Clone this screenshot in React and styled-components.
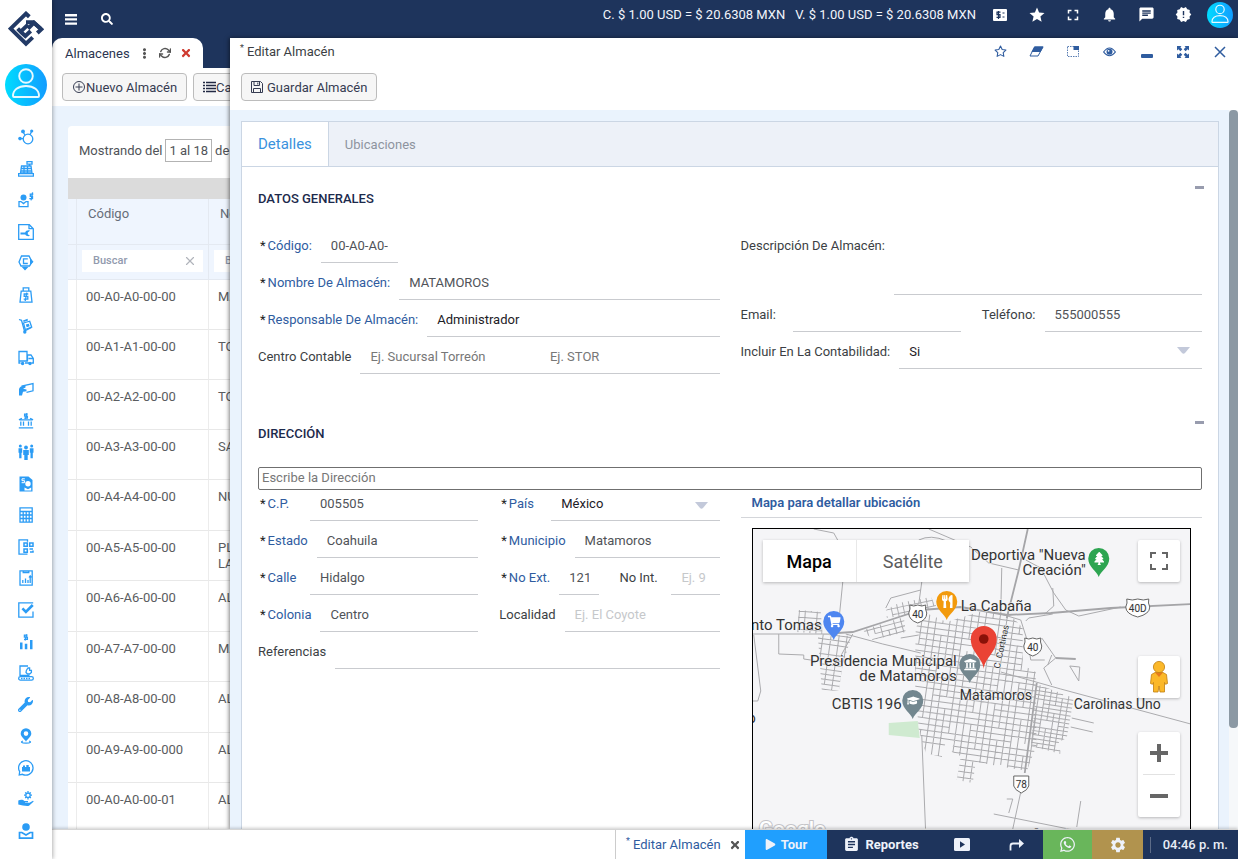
import React from 'react';
import styled, { createGlobalStyle, css } from 'styled-components';
import { FaSearch, FaTimes, FaEllipsisV, FaWrench, FaPlay, FaWhatsapp, FaShoppingCart, FaUtensils, FaTree, FaGraduationCap, FaUniversity } from 'react-icons/fa';
import { MdStar, MdFullscreen, MdNotifications, MdChat, MdNewReleases, MdSettings, MdAssignment } from 'react-icons/md';
import { FiRefreshCw, FiStar, FiX } from 'react-icons/fi';

const colors = {
  navy: '#1e345c',
  sky: '#2b9cf5',
  link: '#2f5c9f',
  text: '#3c3f44',
  line: '#c9cbcf',
  back: '#eaf3fd',
};

const GlobalStyle = createGlobalStyle`
  * {
    box-sizing: border-box;
  }

  body {
    margin: 0;
    overflow: hidden;
    font-family: Roboto, "Liberation Sans", sans-serif;
    font-size: 13px;
    color: ${colors.text};
    background: #fff;
  }

  button, input, select, textarea {
    font: inherit;
    color: inherit;
    border: 0;
    margin: 0;
    padding: 0;
    background: none;
    border-radius: 0;
    outline: none;
  }

  svg {
    display: block;
    flex: none;
  }
`;

/* ---------- shell ---------- */

const Shell = styled.div`
  display: flex;
  height: 100vh;
`;

const Main = styled.div`
  flex: 1;
  min-width: 0;
  display: flex;
  flex-direction: column;
`;

const Workspace = styled.div`
  flex: 1;
  min-height: 0;
  display: flex;
`;

/* ---------- sidebar ---------- */

const Sidebar = styled.aside`
  width: 52px;
  z-index: 3;
  display: flex;
  flex-direction: column;
  align-items: center;
  padding: 11px 0 20px;
  background: #fff;
  box-shadow: 1px 0 4px rgba(0, 0, 0, 0.3);
`;

const SideAvatar = styled.div`
  margin: 17px 0 23px;
`;

const SideNav = styled.nav`
  flex: 1;
  display: flex;
  flex-direction: column;
  justify-content: space-between;
`;

const SideLink = styled.a`
  color: ${colors.sky};
  height: 16px;
`;

const strokeProps = { fill: 'none', stroke: 'currentColor', strokeWidth: 1.3 };

const sideIcons = [
  ['Socios', <g><circle cx="10" cy="10" r="4.8" {...strokeProps} /><path d="M5 3l2 3M13.6 2.5L12 5.8M2 9.6h3" {...strokeProps} /><circle cx="5" cy="2.4" r="1.9" /><circle cx="13.7" cy="2" r="1.6" /><circle cx="2" cy="9.6" r="1.8" /></g>],
  ['Punto de venta', <g><path d="M9 .6h5v2.6H9zM11.5 3v2M3.500 5h9.500l1 7H2.500zM.6 12.600h14.800v2.600H.6zM3 7.500h10M2.800 10h10.700M6 5v7M9.500 5v7" {...strokeProps} /></g>],
  ['Ventas', <g><circle cx="5.500" cy="5.500" r="3" /><path d="M1 9.600h2l2.500 2 2.500-2h2v5H1z" {...strokeProps} /><path d="M15.300 2.200h-3v2.200h2.200v2.200h-3.200M14.600.3l-1.600 8" {...strokeProps} /></g>],
  ['Servicios', <g><path d="M.7.7h10.600l4 4v10.600H.7z" {...strokeProps} /><path d="M11 .7v4h4" {...strokeProps} /><path d="M2.500 8.500h4.700c.6-1.900 2.900-2.800 4.800-1.800L9.800 8.600v1.700l2.200 1.500c-1.900.9-4 .2-4.700-1.300H2.500z" /></g>],
  ['Compras', <g><path d="M3.500 1h7.500l3 5.800-2.500 4.200H3L1 7z" {...strokeProps} /><path d="M9.800 3.800H5.500V8.500h4.300" {...strokeProps} /><path d="M3.800 12h6.600L7 15.600zM12 3l3.500 3.800L12 10.500z" /></g>],
  ['Pedidos', <g><path d="M3.200 4.200h9.600l1.200 11H2zM5.200 4V.8h5.600V4" {...strokeProps} /><path d="M10.300 7H6.200v2.400h3.600v2.700H5.700M8.800 5.600L7.200 14" {...strokeProps} /></g>],
  ['Almacén', <g><path d="M1 1.500l2.500.8L6.500 13l7-3.500" {...strokeProps} /><circle cx="6.800" cy="14" r="1.700" /><path d="M5.500 5l6.200-1.800 2 6L7.200 11.500z" {...strokeProps} /><path d="M7.800 6.600l3-.8.9 2.500-3 .9zM5 2.500L9.500.8l.5 1.800-4.300 1.500z" /></g>],
  ['Embarques', <g><path d="M1 1.500h8v9.500H1zM9.500 5h3.500l2.300 3.500V13h-2M9.500 11.500V5M1 11.500V13h1.500M7 13h4M10.500 8.500h4.500" {...strokeProps} /><circle cx="4.600" cy="13.500" r="1.700" /><circle cx="12" cy="13.500" r="1.700" /></g>],
  ['Pagos', <g><path d="M3.500 5.200L15 2.500v7.300l-6.500 1.500" {...strokeProps} /><path d="M1 8C2 5.200 4 4.600 7.500 4.800v1.800L5 7.700l3.500.8v1.700l-3.500.5-1 3.800H1z" /></g>],
  ['Bancos', <g><path d="M.8 14.800h14.400M1.500 6.800h13M2.800 8.500v4.300M5.500 8.500v4.300M10.500 8.500v4.300M13.200 8.500v4.300M.9 6.800l3-1.600M15.100 6.800l-3-1.600" {...strokeProps} /><path d="M9.800 1.200H6.600v1.900h2.800v2H6.200M8.800.2L7.500 6" {...strokeProps} /></g>],
  ['Recursos humanos', <g><circle cx="8" cy="3.500" r="1.900" /><circle cx="2.300" cy="2" r="1.500" /><circle cx="13.700" cy="2" r="1.500" /><path d="M5.200 6h5.600v5H9.700v5H6.300v-5H5.200zM.5 4.300h3.700v4.500H3.500v5.500H1.200V8.800H.5zM11.800 4.300h3.700v4.500h-.7v5.500h-2.300V8.800h-.7z" /></g>],
  ['Nómina', <g><path d="M1.500.5h9L14.500 4v11.500h-13z" /><path d="M6.800 2.800H4v1.900h2.600v2H3.600" fill="none" stroke="#fff" strokeWidth="1" /><circle cx="10" cy="7.800" r="2.700" fill="#fff" /><path d="M6.500 14.500v-3l3.500 1.700 3.200-1.700v3z" fill="#fff" /></g>],
  ['Contabilidad', <g><path d="M2 .8h12.200v14.400H2zM2 4.500h12.200M2 8h12.200M2 11.500h12.200M5.200 4.500v10.700M8.200 4.500v10.700M11.200 4.500v10.700" {...strokeProps} /></g>],
  ['Inventario', <g><path d="M9.500 15.200H1V.8h8.500v2" {...strokeProps} /><path d="M6 4h3.300v3.300H6zM11.700 4H15v3.300h-3.300zM6 10h3.300v3.300H6zM11.500 10H15M12 13h3v-1.500" fill="none" stroke="currentColor" strokeWidth="1.500" /></g>],
  ['Informes', <g><path d="M2 .8h12.200v14.400H2zM5.200 1v1.500h5.600V1M4.800 13v-3M7.500 13V8.500M10 13v-3M12.200 13V6.500M11 7.500l1.200-1.700L13.400 7.500" {...strokeProps} /></g>],
  ['Tareas', <g><path d="M15 9.500v5.700H.8V.8h14.400" {...strokeProps} /><path d="M3.500 7.300L5.300 5.400l2.600 2.700L13.800 2l1.900 1.900-7.800 7.900z" /></g>],
  ['Estadísticas', <g><path d="M2 8.500h2.500v6.700H2zM6.800 9.800h2.500v5.400H6.800zM12 6h2.500v9.200H12z" /><path d="M9.600 1.200H6.400v2h3v2.200H6M8.800.2L7 6.500" {...strokeProps} /></g>],
  ['Producción', <g><path d="M10 1H2v9.300h9.500" {...strokeProps} /><path d="M8 7.500c0-2.500 1-3 2-4.500h1.600v2.300h1.800v2.200l-1.800 1.500H9.500z" {...strokeProps} /><rect x=".7" y="11.600" width="14.600" height="3.500" rx="1.700" {...strokeProps} /><path d="M3 13.400h10" fill="none" stroke="currentColor" strokeWidth="1.500" strokeDasharray="1.500 1" /></g>],
  ['Mantenimiento', null],
  ['Ubicaciones', <g><path d="M8 .3a5.300 5.300 0 0 0-5.300 5.300C2.700 9 6.500 11 8 13.700 9.500 11 13.300 9 13.300 5.600A5.300 5.300 0 0 0 8 .3zm0 7.600a2.300 2.300 0 1 1 0-4.600 2.300 2.300 0 0 1 0 4.600z" /><path d="M5 13c-2.500.8-2 2.200 3 2.200s5.500-1.400 3-2.200" {...strokeProps} /></g>],
  ['Soporte', <g><path d="M1.200 15l.5-3.300A7.200 7.200 0 1 1 4.500 14.300z" {...strokeProps} /><path d="M4 7h1V5.500h2V7h1.300V5h2.400v2H12v4.500H4z" /></g>],
  ['Beneficios', <g><circle cx="10" cy="4.200" r="2.200" {...strokeProps} /><path d="M10 0v1.500M10 7v1.500M6 4.200h1.500M12.500 4.200H14M7.200 1.400l1 1M12.800 1.400l-1 1M7.200 7l1-1M12.800 7l-1-1" {...strokeProps} /><path d="M.3 9.500C3 8.200 5 8.700 6.500 10H10v1.200H7v.6h4.500l3.500-2 .7.8-4.700 4.200c-3 .8-7-.8-10.700-1.300z" /></g>],
  ['Perfil', <g><circle cx="8" cy="4" r="3.800" /><path d="M1.500 9.500h2.300L8 12l4.200-2.500h2.300v5.700h-13z" fill="none" stroke="currentColor" strokeWidth="1.700" /></g>],
];

const Avatar = ({ size }) => (
  <svg width={size} height={size} viewBox="0 0 42 42" role="img" aria-label="Usuario">
    <defs>
      <linearGradient id={`avatar${size}`} x1="0" y1="0" x2="1" y2="0">
        <stop offset="0" stopColor="#00dcff" />
        <stop offset="1" stopColor="#129cff" />
      </linearGradient>
    </defs>
    <circle cx="21" cy="21" r="21" fill={`url(#avatar${size})`} />
    <g fill="none" stroke="#e8f9ff" strokeWidth="1.900" strokeLinejoin="round">
      <circle cx="21" cy="12" r="6.800" />
      <path d="M8 32c0-6 5-10 13-10s13 4 13 10c0 .8-.5 1-1 1H9c-.6 0-1-.3-1-1z" />
    </g>
  </svg>
);

const Logo = () => (
  <svg width="36" height="36" viewBox="24 35 108 108" role="img" aria-label="Inicio">
    <g fill="none" stroke="#223a66" strokeWidth="12">
      <path d="M88 52L78 43 32 88 78 133 98 114" />
      <path d="M53 88L62 97 84 76M62 97L76 110 92 95" />
      <path d="M78 69L100 69 122 88" />
      <path d="M84 88L102 70 124 90 112 101" />
    </g>
  </svg>
);

/* ---------- top bar ---------- */

const TopBar = styled.header`
  height: 38px;
  flex: none;
  display: flex;
  justify-content: space-between;
  color: #fff;
  background: ${colors.navy};
`;

const TopLeft = styled.div`
  display: flex;
  align-items: center;
  gap: 24px;
  padding-left: 13px;
`;

const TopRight = styled.div`
  display: flex;
  height: 29px;
  align-items: center;
`;

const Rates = styled.div`
  display: flex;
  gap: 10px;
  margin-right: 6px;
  font-size: 13px;
  color: #f2f5fb;
`;

const IconSlots = styled.div`
  width: 256px;
  flex: none;
  display: grid;
  grid-template-columns: repeat(7, 1fr);
  align-items: center;
  justify-items: center;
`;

const IconButton = styled.button`
  display: flex;
  align-items: center;
  justify-content: center;
  cursor: pointer;
  color: ${(props) => props.$color || 'inherit'};
`;

/* ---------- list window ---------- */

const ListWindow = styled.section`
  width: 178px;
  flex: none;
  overflow: hidden;
  background: ${colors.back};
`;

const TabStrip = styled.div`
  height: 30px;
  background: ${colors.navy};
`;

const WindowTab = styled.div`
  width: 151px;
  height: 30px;
  display: flex;
  align-items: center;
  gap: 9px;
  padding: 0 11px 0 13px;
  border-radius: 10px 10px 0 0;
  background: #fff;
`;

const WindowName = styled.span`
  flex: 1;
  color: #2b3550;
`;

const Toolbar = styled.div`
  display: flex;
  gap: 6px;
  padding: ${(props) => props.$padding};
  background: #fff;
`;

const ToolButton = styled.button`
  height: 28px;
  flex: none;
  display: flex;
  align-items: center;
  gap: ${(props) => props.$gap || '0'};
  padding: 0 9px;
  font-size: 13px;
  white-space: nowrap;
  color: #363c52;
  border: 1px solid #bcbcbc;
  border-radius: 4px;
  background: #f6f6f6;
  cursor: pointer;
`;

const ListCard = styled.div`
  width: 300px;
  margin: 20px 0 0 16px;
  border-radius: 4px;
  background: #fff;
`;

const Showing = styled.div`
  height: 52px;
  display: flex;
  align-items: center;
  gap: 3px;
  padding: 0 11px 3px;
  color: #505358;
`;

const Range = styled.span`
  padding: 3px;
  border: 1px solid #b3b3b3;
`;

const Band = styled.div`
  height: 21px;
  background: #dbdbdb;
`;

const Table = styled.table`
  width: 100%;
  table-layout: fixed;
  border-collapse: separate;
  border-spacing: 0;

  th, td {
    padding: 9px 9px 0;
    text-align: left;
    vertical-align: top;
    line-height: 16px;
    border-right: 1px solid #ececec;
    border-bottom: 1px solid #e8e8e8;
  }

  th {
    padding: 7px 11px 0;
    font-weight: 400;
    color: #666d79;
    background: #eff5fe;
    border-color: #e4e9f1;
  }

  tr > :first-child {
    width: 9px;
    padding: 0;
  }

  tr > :nth-child(2) {
    width: 132px;
  }

  tbody tr {
    height: 50px;
  }

  tbody tr:nth-child(2n + 5) {
    height: 51px;
  }

  td {
    color: #5a5c60;
  }
`;

const HeadRow = styled.tr`
  height: 46px;
`;

const FilterRow = styled.tr`
  height: 35px;

  th {
    padding: 5px;
  }
`;

const Filter = styled.label`
  height: 22px;
  display: flex;
  align-items: center;
  padding: 0 6px 0 11px;
  color: #b0b4bb;
  background: #fff;

  input {
    width: 100%;
    min-width: 0;
    font-size: 11px;
    font-weight: 500;
  }

  input::placeholder {
    color: #929aae;
  }
`;

/* ---------- editor window ---------- */

const Editor = styled.section`
  flex: 1;
  min-width: 0;
  z-index: 1;
  display: flex;
  flex-direction: column;
  background: #fff;
  box-shadow: -1px 0 4px rgba(0, 0, 0, 0.5);
`;

const TitleBar = styled.div`
  height: 27px;
  flex: none;
  display: flex;
  justify-content: space-between;
  align-items: center;
  padding-left: 10px;

  h1 {
    margin: 0;
    font-size: 13px;
    font-weight: 400;
  }
`;

const Star = styled.sup`
  font-size: 9px;
  line-height: 1;
  margin-right: 3px;
`;

const EditorBody = styled.div`
  flex: 1;
  min-height: 0;
  display: flex;
  background: ${colors.back};
`;

const Scroller = styled.div`
  flex: 1;
  min-width: 0;
  overflow-y: auto;
  scrollbar-width: none;
  padding: 11px 10px 0 11px;
`;

const Rail = styled.div`
  width: 9px;
  flex: none;
  background: #f6f8fa;
`;

const Thumb = styled.div`
  height: 86%;
  border-radius: 4px;
  background: #8c99a4;
`;

const Panel = styled.div`
  border: 1px solid #cbd6e4;
  background: #fff;
`;

const Tabs = styled.div`
  height: 45px;
  display: flex;
  background: #edf1f8;
  border-bottom: 1px solid #cbd6e4;
`;

const Tab = styled.button`
  padding: 0 16px;
  color: #8d949f;
  cursor: pointer;

  ${(props) => props.$active && css`
    font-size: 15px;
    color: #3a92dd;
    background: #fff;
    border-right: 1px solid #cbd6e4;
  `}
`;

const Section = styled.section`
  padding: 0 16px;
`;

const SectionHead = styled.div`
  height: 59px;
  display: flex;
  justify-content: space-between;
  align-items: flex-start;
  padding-top: 12px;

  h2 {
    margin: 11px 0 0;
    font-size: 13px;
    line-height: 18px;
    font-weight: 500;
    color: #1c2a4c;
  }
`;

const Collapse = styled.button`
  width: 13px;
  height: 17px;
  margin-right: -4px;
  display: flex;
  align-items: center;
  justify-content: center;
  cursor: pointer;

  &::before {
    content: "";
    width: 9px;
    height: 3px;
    background: #989cae;
  }
`;

const Columns = styled.div`
  display: grid;
  grid-template-columns: 1fr 1fr;
  column-gap: ${(props) => props.$gap || '21px'};
  align-items: start;
  margin-bottom: ${(props) => props.$after || '0'};
`;

const FieldRow = styled.div`
  display: flex;
  height: ${(props) => (props.$short ? '31px' : '37px')};
  width: ${(props) => props.$width || 'auto'};
  grid-column: ${(props) => (props.$wide ? '1 / -1' : 'auto')};

  > label {
    flex: none;
    min-width: 52px;
    padding-right: 9px;
    line-height: ${(props) => (props.$short ? '27px' : '39px')};
    color: ${(props) => (props.$required ? colors.link : colors.text)};
  }

  > label::before {
    content: ${(props) => (props.$required ? '"*"' : 'none')};
    margin: 0 2px;
    color: #222;
  }

  input, select {
    flex: 1;
    width: 100%;
    min-width: 0;
    padding: ${(props) => (props.$short ? '0 10px 4px' : '2px 10px 0')};
    color: ${(props) => (props.$strong ? '#1d2026' : '#505358')};
    border-bottom: 1px solid ${colors.line};
  }

  select {
    appearance: none;
    color: #1d2026;
  }

  input::placeholder {
    color: ${(props) => (props.$faint ? '#c6c8cb' : '#777')};
    opacity: 1;
  }
`;

const SelectBox = styled.span`
  flex: 1;
  min-width: 0;
  display: grid;
  align-items: stretch;

  > * {
    grid-area: 1 / 1;
  }

  svg {
    justify-self: end;
    align-self: center;
    margin-right: 12px;
    pointer-events: none;
  }
`;

const AreaRow = styled.div`
  display: flex;
  height: 69px;

  label {
    padding-right: 9px;
    line-height: 39px;
  }

  textarea {
    flex: 1;
    min-width: 0;
    padding: 10px;
    resize: none;
    border-bottom: 1px solid ${colors.line};
  }
`;

const AddressInput = styled.input`
  width: 100%;
  height: 23px;
  display: block;
  margin-top: 6px;
  padding: 0 3px 2px;
  border: 1px solid #6f6f6f;
  border-radius: 2px;

  &::placeholder {
    color: #777;
    opacity: 1;
  }
`;

/* ---------- map ---------- */

const MapTitle = styled.h3`
  margin: 0;
  height: 28px;
  padding-left: 11px;
  font-size: 13px;
  line-height: 26px;
  font-weight: 600;
  color: ${colors.link};
  border-bottom: 1px solid #d4d6da;
`;

const MapBox = styled.div`
  position: relative;
  height: 316px;
  margin: 10px 11px 24px;
  overflow: hidden;
  border: 1px solid #000;
  background: #f5f5f7;
`;

const MapControls = styled.div`
  position: absolute;
  inset: 11px 10px 12px;
  display: flex;
  justify-content: space-between;
`;

const MapTypes = styled.div`
  height: 42px;
  display: flex;
  background: #fff;
  box-shadow: 0 1px 3px rgba(0, 0, 0, 0.25);
`;

const MapType = styled.button`
  padding: 0 ${(props) => (props.$active ? '24px' : '26px')};
  font-size: 18px;
  font-weight: ${(props) => (props.$active ? 500 : 400)};
  color: ${(props) => (props.$active ? '#000' : '#5c5c5c')};
  border-right: ${(props) => (props.$active ? '1px solid #e8e8e8' : '0')};
  cursor: pointer;
`;

const MapSide = styled.div`
  display: flex;
  flex-direction: column;
`;

const MapButton = styled.button`
  width: 42px;
  height: 42px;
  display: flex;
  align-items: center;
  justify-content: center;
  background: #fff;
  box-shadow: 0 1px 3px rgba(0, 0, 0, 0.25);
  border-radius: 2px;
  cursor: pointer;
  margin-bottom: ${(props) => props.$after || '0'};
`;

const ZoomGroup = styled.div`
  background: #fff;
  box-shadow: 0 1px 3px rgba(0, 0, 0, 0.25);
  border-radius: 2px;

  button {
    box-shadow: none;
    background: none;
  }

  hr {
    margin: 0 5px;
    border: 0;
    height: 1px;
    background: #e2e2e2;
  }
`;

// street blocks: straight lines in a tilted frame, with some blocks left open
const streets = (cx, cy, w, h, sx, sy) => {
  let d = '';
  let n = 0;
  for (let x = -w / 2; x <= w / 2; x += sx) {
    for (let y = -h / 2; y < h / 2; y += sy * 2) {
      n += 1;
      if ((n * 37) % 11 > 0) d += `M${cx + x} ${cy + y}v${sy * 2}`;
    }
  }
  for (let y = -h / 2; y <= h / 2; y += sy) {
    for (let x = -w / 2; x < w / 2; x += sx * 3) {
      n += 1;
      if ((n * 29) % 13 > 0) d += `M${cx + x} ${cy + y}h${sx * 3}`;
    }
  }
  return d;
};

const districts = [
  { id: 'centro', tilt: 8, at: [970, 690], size: [200, 220], step: [7, 6], edge: '915,628 923,612 946,622 978,612 1007,612 1022,628 1022,665 1035,672 1036,745 1026,771 975,762 972,783 956,780 960,756 951,752 953,742 945,742 941,757 925,753 918,730 914,680' },
  { id: 'oriente', tilt: 9, at: [1050, 715], size: [90, 100], step: [6, 4], edge: '1036,684 1073,698 1066,738 1058,742 1060,754 1030,746' },
  { id: 'poniente', tilt: -15, at: [888, 630], size: [70, 60], step: [7, 5], edge: '862,630 903,617 905,632 872,640' },
  { id: 'norte', tilt: -12, at: [895, 610], size: [80, 40], step: [6, 6], edge: '885,610 898,603 930,597 936,607 900,616 886,618' },
  { id: 'tomas', tilt: 8, at: [830, 660], size: [70, 90], step: [8, 5], edge: '817,634 851,636 842,664 838,691 821,690' },
  { id: 'tomas2', tilt: 4, at: [810, 620], size: [60, 40], step: [6, 6], edge: '798,610 820,612 822,634 796,632' },
];

const roads = 'M813 529l20 4 5 9M842 582l-5 50M752 634h85M778 634v20l25 1v4l14 2M852 634l-12 22M753 635l7 56-3 10h-5M921 582l-3 22M918 540q12-6 28 1M928 529l42 18 18 16 30 7M1001 568l-1 44M1025 560l15 8 13 25 12 17 13 6 42-9M1052 588l1 18-9 8M1000 614l20 6 7 22M1027 640l3 20h14M1041 638l14 20-12 10 8 17M1000 672l60 17 130 35M1071 718l22 5M1070 727l22 5M1020 792l-8 37M993 814l90 18M1080 801l-4 26M921 735l4 100M1006 799h6l-4 14M845 634l37 10 38 9M1069 666l10 1-1 14zM1047 665l4-10M1025 621l3-3 24-4M885 608l5-10 30-8M900 638l18-3';
const highways = 'M837 633l15-1 28-9 40-13 40-3 45 8 45-2 60-5 80-4M1027 529l-9 41-12 48M1055 658l20 1M1036 683l-12 90';

const MapLabel = styled.text`
  font-family: Roboto, sans-serif;
  font-size: ${(props) => props.$size || '15px'};
  fill: #333;
  stroke: #f5f5f7;
  stroke-width: 1px;
  paint-order: stroke;
`;

const LogoLabel = styled.text`
  font-family: Roboto, sans-serif;
  font-size: 21px;
  font-weight: 500;
  fill: #fff;
  stroke: #c4c4c8;
  stroke-width: 2px;
  paint-order: stroke;
`;

const pins = [
  { x: 833, y: 640, fill: '#4e86f0', Icon: FaShoppingCart },
  { x: 946, y: 620, fill: '#f29a0c', Icon: FaUtensils },
  { x: 1098, y: 577, fill: '#2da551', Icon: FaTree },
  { x: 969, y: 683, fill: '#73878f', Icon: FaUniversity },
  { x: 912, y: 719, fill: '#73878f', Icon: FaGraduationCap },
];

const shields = [
  { x: 917, y: 614, w: 16, label: '40' },
  { x: 1032, y: 647, w: 16, label: '40' },
  { x: 1137, y: 608, w: 22, label: '40D' },
];

const CityMap = () => (
  <svg width="100%" height="100%" viewBox="752 529 438 314" preserveAspectRatio="xMidYMin slice" role="img" aria-label="Mapa de Matamoros">
    <defs>
      {districts.map((d) => (
        <clipPath id={d.id} key={d.id}><polygon points={d.edge} /></clipPath>
      ))}
    </defs>
    <path d="M888 723l29-2 2 17-31-3z" fill="#cfead0" />
    <g fill="none" stroke="#ababae" strokeWidth="1">
      {districts.map((d) => (
        <g clipPath={`url(#${d.id})`} key={d.id}>
          <path d={streets(...d.at, ...d.size, ...d.step)} transform={`rotate(${d.tilt} ${d.at[0]} ${d.at[1]})`} />
        </g>
      ))}
      <path d={roads} />
      <path d={highways} stroke="#a5a5a8" strokeWidth="1.800" />
    </g>
    {shields.map(({ x, y, w, label }) => (
      <g key={`${x}-${label}`}>
        <path d={`M${x - w / 2} ${y - 9}q${w / 4} 2 ${w / 2} 0q${w / 4} 2 ${w / 2} 0q-1 4 1 8q0 7-${w / 2 + 1} 10q-${w / 2 + 1}-3-${w / 2 + 1}-10q2-4 1-8z`} fill="#fff" stroke="#666" />
        <MapLabel $size="10px" x={x} y={y + 4} textAnchor="middle">{label}</MapLabel>
      </g>
    ))}
    <path d="M1013 776h15v10q-1 4-7.500 7q-6.500-3-7.500-7z" fill="#fff" stroke="#666" />
    <MapLabel $size="10px" x="1020.500" y="788" textAnchor="middle">78</MapLabel>
    <MapLabel x="1085" y="560" textAnchor="end">Deportiva "Nueva</MapLabel>
    <MapLabel x="1085" y="575" textAnchor="end">Creación"</MapLabel>
    <MapLabel x="960" y="611">La Cabaña</MapLabel>
    <MapLabel x="821" y="630" textAnchor="end">nto Tomas</MapLabel>
    <MapLabel x="956" y="666" textAnchor="end">Presidencia Municipal</MapLabel>
    <MapLabel x="956" y="681" textAnchor="end">de Matamoros</MapLabel>
    <MapLabel x="831" y="709">CBTIS 196</MapLabel>
    <MapLabel $size="14px" x="959" y="700">Matamoros</MapLabel>
    <MapLabel $size="14px" x="1073" y="709">Carolinas Uno</MapLabel>
    <MapLabel $size="14px" x="755" y="723" textAnchor="end">o</MapLabel>
    <MapLabel $size="9px" transform="translate(999 669) rotate(-78)">C. Cortinas</MapLabel>
    {pins.map(({ x, y, fill, Icon }) => (
      <g transform={`translate(${x} ${y})`} key={`${x}-${y}`}>
        <path d="M0 0C-2-6-10.500-10-10.500-18.500A10.500 10.500 0 0 1 10.500-18.500C10.500-10 2-6 0 0z" fill={fill} />
        <Icon x="-6" y="-25" width="12" height="12" color="#fff" />
      </g>
    ))}
    <path d="M983 669C982 658 970 652 970 639a13 13 0 0 1 26 0C996 652 984 658 983 669z" fill="#ea4335" />
    <circle cx="983" cy="639" r="4.800" fill="#8a1108" />
    <LogoLabel x="758" y="836">Google</LogoLabel>
    <MapLabel $size="10px" x="824" y="837">Combinaciones de teclas</MapLabel>
    <MapLabel $size="10px" x="1166" y="837" textAnchor="end">Datos del mapa ©2023 INEGI   Términos de uso</MapLabel>
  </svg>
);

const Pegman = () => (
  <svg width="20" height="34" viewBox="0 0 20 34">
    <path d="M6 12.500h8l3.500 2 1 9-2 .8-1-1.800V32h-4.500l-1-6-1 6H4.500v-9.500l-1 1.800-2-.8 1-9z" fill="#fbb829" stroke="#c07f10" strokeWidth=".8" />
    <path d="M6 12.500h8l-4 4.500z" fill="#e77a1c" />
    <circle cx="10" cy="7" r="5.600" fill="#fbb829" stroke="#c07f10" strokeWidth=".8" />
  </svg>
);

/* ---------- footer ---------- */

const Footer = styled.footer`
  height: 30px;
  flex: none;
  z-index: 2;
  display: flex;
  justify-content: flex-end;
  background: #fff;
  border-top: 1px solid #d5d5d5;
  box-shadow: 0 -1px 3px rgba(0, 0, 0, 0.2);
`;

const OpenWindow = styled.div`
  width: 130px;
  display: flex;
  align-items: center;
  padding: 0 4px 0 10px;
  color: ${colors.link};
  border-left: 1px solid #ccc;

  a {
    flex: 1;
    color: inherit;
    text-decoration: none;
  }
`;

const FootButton = styled.button`
  width: ${(props) => props.$width};
  display: flex;
  align-items: center;
  justify-content: center;
  gap: 5px;
  font-weight: 700;
  color: #eef2fa;
  background: ${(props) => props.$fill || colors.navy};
  cursor: pointer;
`;

const Clock = styled.div`
  width: 95px;
  display: flex;
  align-items: center;
  justify-content: space-between;
  padding: 0 10px 0 7px;
  font-weight: 500;
  color: #e8edf6;
  background: ${colors.navy};

  &::before {
    content: "";
    width: 1px;
    height: 16px;
    background: #5d6c88;
  }
`;

/* ---------- pieces ---------- */

const Field = ({ id, label, value, placeholder, ...rest }) => (
  <FieldRow {...rest}>
    <label htmlFor={id}>{label}</label>
    <input id={id} defaultValue={value} placeholder={placeholder} />
  </FieldRow>
);

const SelectField = ({ id, label, value, ...rest }) => (
  <FieldRow {...rest}>
    <label htmlFor={id}>{label}</label>
    <SelectBox>
      <select id={id}>
        <option>{value}</option>
      </select>
      <svg width="13" height="7" viewBox="0 0 13 7"><path d="M0 0h13L8 6q-1.500 1.500-3 0z" fill="#c3c9da" /></svg>
    </SelectBox>
  </FieldRow>
);

const rows = [
  ['00-A0-A0-00-00', 'MATAMOROS'],
  ['00-A1-A1-00-00', 'TORREON'],
  ['00-A2-A2-00-00', 'TORREON 2'],
  ['00-A3-A3-00-00', 'SALTILLO'],
  ['00-A4-A4-00-00', 'NUEVO'],
  ['00-A5-A5-00-00', 'PLANTA', 'LAGUNA'],
  ['00-A6-A6-00-00', 'ALMACEN'],
  ['00-A7-A7-00-00', 'MATRIZ'],
  ['00-A8-A8-00-00', 'ALMACEN'],
  ['00-A9-A9-00-000', 'ALMACEN'],
  ['00-A0-A0-00-01', 'ALMACEN'],
];

const AlmacenesList = () => (
  <ListWindow>
    <TabStrip>
      <WindowTab>
        <WindowName>Almacenes</WindowName>
        <IconButton aria-label="Opciones"><FaEllipsisV size={11} color="#555" /></IconButton>
        <IconButton aria-label="Actualizar"><FiRefreshCw size={12} color="#555" strokeWidth={3} /></IconButton>
        <IconButton aria-label="Cerrar"><FaTimes size={12} color="#cf3b30" /></IconButton>
      </WindowTab>
    </TabStrip>
    <Toolbar $padding="5px 10px">
      <ToolButton>
        <svg width="14" height="14" viewBox="0 0 14 14" fill="none" stroke="#363c52"><circle cx="7" cy="7" r="5.500" /><path d="M7 3.500v7M3.500 7h7" /></svg>
        Nuevo Almacén
      </ToolButton>
      <ToolButton>
        <svg width="13" height="12" viewBox="0 0 13 12" stroke="#222943" strokeWidth="1.600"><path d="M0 1.500h2M3 1.500h10M0 4.500h2M3 4.500h10M0 7.500h2M3 7.500h10M0 10.500h2M3 10.500h10" /></svg>
        Cargar
      </ToolButton>
    </Toolbar>
    <ListCard>
      <Showing>Mostrando del <Range>1 al 18</Range> de un total</Showing>
      <Band />
      <Table>
        <thead>
          <HeadRow>
            <th />
            <th>Código</th>
            <th>Nombre</th>
          </HeadRow>
          <FilterRow>
            <th />
            <th><Filter><input aria-label="Buscar código" placeholder="Buscar" /><FiX size={14} /></Filter></th>
            <th><Filter><input aria-label="Buscar nombre" placeholder="Buscar" /><FiX size={14} /></Filter></th>
          </FilterRow>
        </thead>
        <tbody>
          {rows.map(([code, name, more]) => (
            <tr key={code}>
              <td />
              <td>{code}</td>
              <td>{name}{more && <><br />{more}</>}</td>
            </tr>
          ))}
        </tbody>
      </Table>
    </ListCard>
  </ListWindow>
);

const App = () => (
  <>
    <GlobalStyle />
    <Shell>
      <Sidebar>
        <Logo />
        <SideAvatar><Avatar size={42} /></SideAvatar>
        <SideNav>
          {sideIcons.map(([name, drawing]) => (
            <SideLink href="#" aria-label={name} key={name}>
              {drawing ? <svg width="16" height="16" viewBox="0 0 16 16" fill="currentColor">{drawing}</svg> : <FaWrench size={15} />}
            </SideLink>
          ))}
        </SideNav>
      </Sidebar>

      <Main>
        <TopBar>
          <TopLeft>
            <IconButton aria-label="Menú">
              <svg width="12" height="11" viewBox="0 0 12 11" fill="#fff"><path d="M0 0h12v2.400H0zM0 4.200h12v2.400H0zM0 8.400h12v2.400H0z" /></svg>
            </IconButton>
            <IconButton aria-label="Buscar"><FaSearch size={12} /></IconButton>
          </TopLeft>
          <TopRight>
            <Rates>
              <span>C. $ 1.00 USD = $ 20.6308 MXN</span>
              <span>V. $ 1.00 USD = $ 20.6308 MXN</span>
            </Rates>
            <IconSlots>
              <IconButton aria-label="Tipo de cambio">
                <svg width="14" height="12" viewBox="0 0 14 12"><rect width="14" height="12" rx="1" fill="#fff" /><path d="M7.500 3.200H4v2.500h3v2.600H3.500M5.500 2v8M9.500 4h2M9.500 8h2" fill="none" stroke={colors.navy} strokeWidth="1.200" /></svg>
              </IconButton>
              <IconButton aria-label="Favoritos"><MdStar size={18} /></IconButton>
              <IconButton aria-label="Pantalla completa"><MdFullscreen size={18} /></IconButton>
              <IconButton aria-label="Notificaciones"><MdNotifications size={17} /></IconButton>
              <IconButton aria-label="Mensajes"><MdChat size={17} /></IconButton>
              <IconButton aria-label="Avisos"><MdNewReleases size={17} /></IconButton>
              <IconButton aria-label="Cuenta"><Avatar size={26} /></IconButton>
            </IconSlots>
          </TopRight>
        </TopBar>

        <Workspace>
          <AlmacenesList />

          <Editor>
            <TitleBar>
              <h1><Star>*</Star>Editar Almacén</h1>
              <IconSlots>
                <IconButton $color={colors.link} aria-label="Favorito"><FiStar size={13} /></IconButton>
                <IconButton $color={colors.link} aria-label="Limpiar">
                  <svg width="15" height="11" viewBox="0 0 15 11"><path d="M5.500 1h8.500L9 10H1z" fill="none" stroke="currentColor" /><path d="M5.500.5h9L11.500 6H2.500z" fill="currentColor" /></svg>
                </IconButton>
                <IconButton $color={colors.link} aria-label="Acoplar">
                  <svg width="12" height="11" viewBox="0 0 12 11"><rect x=".5" y=".5" width="11" height="10" fill="none" stroke="currentColor" strokeWidth=".8" strokeDasharray="1.500 1" /><path d="M6.500 0H12v4H6.500z" fill="currentColor" /></svg>
                </IconButton>
                <IconButton $color={colors.link} aria-label="Ver">
                  <svg width="13" height="10" viewBox="0 0 13 10"><path d="M.6 5Q6.500-3 12.400 5 6.500 12.500.6 5z" fill="none" stroke="currentColor" strokeWidth="1.200" /><circle cx="6.500" cy="4.700" r="3" fill="currentColor" /><circle cx="5.600" cy="3.800" r=".9" fill="#fff" /></svg>
                </IconButton>
                <IconButton $color={colors.link} aria-label="Minimizar">
                  <svg width="12" height="12" viewBox="0 0 12 12"><rect y="8" width="12" height="4" rx="1" fill="currentColor" /></svg>
                </IconButton>
                <IconButton $color={colors.link} aria-label="Maximizar">
                  <svg width="12" height="12" viewBox="0 0 12 12" fill="currentColor"><path d="M0 0h4.500L3.300 1.300l2 2-1.900 2-2-2L0 4.600zM12 0v4.600l-1.400-1.300-2 2-1.900-2 2-2L7.500 0zM0 12V7.400l1.400 1.300 2-2 1.900 2-2 2L4.500 12zM12 12H7.500l1.200-1.300-2-2 1.900-2 2 2L12 7.400z" /></svg>
                </IconButton>
                <IconButton $color={colors.link} aria-label="Cerrar">
                  <svg width="12" height="12" viewBox="0 0 12 12"><path d="M1 1l10 10M11 1L1 11" stroke="currentColor" strokeWidth="1.500" /></svg>
                </IconButton>
              </IconSlots>
            </TitleBar>
            <Toolbar $padding="8px 11px 9px">
              <ToolButton $gap="4px">
                <svg width="12" height="12" viewBox="0 0 12 12" fill="none" stroke="currentColor"><path d="M.5.5h9l2 2v9H.5zM3 .5v4h5.500v-4M6.800 1.500v2M2.500 11.500v-4h7v4" /></svg>
                Guardar Almacén
              </ToolButton>
            </Toolbar>

            <EditorBody>
              <Scroller>
                <Panel>
                  <Tabs>
                    <Tab $active>Detalles</Tab>
                    <Tab>Ubicaciones</Tab>
                  </Tabs>

                  <Section>
                    <SectionHead>
                      <h2>DATOS GENERALES</h2>
                      <Collapse aria-label="Contraer datos generales" />
                    </SectionHead>
                    <Columns $after="28px">
                      <div>
                        <Field id="codigo" label="Código:" value="00-A0-A0-00-00" $required $width="140px" />
                        <Field id="nombre" label="Nombre De Almacén:" value="MATAMOROS" $required />
                        <Field id="responsable" label="Responsable De Almacén:" value="Administrador" $required $strong />
                        <FieldRow>
                          <label htmlFor="centro-contable">Centro Contable</label>
                          <input id="centro-contable" placeholder="Ej. Sucursal Torreón" />
                          <input aria-label="Clave del centro contable" placeholder="Ej. STOR" />
                        </FieldRow>
                      </div>
                      <div>
                        <AreaRow>
                          <label htmlFor="descripcion">Descripción De Almacén:</label>
                          <textarea id="descripcion" />
                        </AreaRow>
                        <Columns>
                          <Field id="email" label="Email:" />
                          <Field id="telefono" label="Teléfono:" value="555000555" />
                        </Columns>
                        <SelectField id="contabilidad" label="Incluir En La Contabilidad:" value="Si" />
                      </div>
                    </Columns>
                  </Section>

                  <Section>
                    <SectionHead>
                      <h2>DIRECCIÓN</h2>
                      <Collapse aria-label="Contraer dirección" />
                    </SectionHead>
                    <AddressInput aria-label="Dirección" placeholder="Escribe la Dirección" />
                    <Columns>
                      <Columns>
                        <Field id="cp" label="C.P." value="005505" $required $short />
                        <SelectField id="pais" label="País" value="México" $required $short />
                        <Field id="estado" label="Estado" value="Coahuila" $required />
                        <Field id="municipio" label="Municipio" value="Matamoros" $required />
                        <Field id="calle" label="Calle" value="Hidalgo" $required />
                        <Columns $gap="20px">
                          <Field id="ext" label="No Ext." value="121" $required />
                          <Field id="int" label="No Int." placeholder="Ej. 9" $faint />
                        </Columns>
                        <Field id="colonia" label="Colonia" value="Centro" $required />
                        <Field id="localidad" label="Localidad" placeholder="Ej. El Coyote" $faint />
                        <Field id="referencias" label="Referencias" $wide />
                      </Columns>
                      <div>
                        <MapTitle>Mapa para detallar ubicación</MapTitle>
                        <MapBox>
                          <CityMap />
                          <MapControls>
                            <MapTypes>
                              <MapType $active>Mapa</MapType>
                              <MapType>Satélite</MapType>
                            </MapTypes>
                            <MapSide>
                              <MapButton aria-label="Pantalla completa" $after="74px">
                                <svg width="18" height="18" viewBox="0 0 18 18" fill="none" stroke="#666" strokeWidth="2"><path d="M1 6V1h5M12 1h5v5M17 12v5h-5M6 17H1v-5" /></svg>
                              </MapButton>
                              <MapButton aria-label="Vista de calle" $after="34px"><Pegman /></MapButton>
                              <ZoomGroup>
                                <MapButton aria-label="Acercar"><svg width="18" height="18" viewBox="0 0 18 18"><path d="M9 0v18M0 9h18" stroke="#666" strokeWidth="4" /></svg></MapButton>
                                <hr />
                                <MapButton aria-label="Alejar"><svg width="18" height="4" viewBox="0 0 18 4"><path d="M0 2h18" stroke="#666" strokeWidth="4" /></svg></MapButton>
                              </ZoomGroup>
                            </MapSide>
                          </MapControls>
                        </MapBox>
                      </div>
                    </Columns>
                  </Section>
                </Panel>
              </Scroller>
              <Rail><Thumb /></Rail>
            </EditorBody>
          </Editor>
        </Workspace>

        <Footer>
          <OpenWindow>
            <a href="#"><Star>*</Star>Editar Almacén</a>
            <IconButton aria-label="Cerrar ventana"><FaTimes size={12} color="#555" /></IconButton>
          </OpenWindow>
          <FootButton $width="82px" $fill="#209ffe"><FaPlay size={11} />Tour</FootButton>
          <FootButton $width="108px"><MdAssignment size={17} />Reportes</FootButton>
          <FootButton $width="54px" aria-label="Videos">
            <svg width="16" height="13" viewBox="0 0 16 13"><rect width="16" height="13" rx="1.500" fill="#eef2fa" /><path d="M6 3.300v6.400l5-3.200z" fill={colors.navy} /></svg>
          </FootButton>
          <FootButton $width="54px" aria-label="Compartir">
            <svg width="15" height="12" viewBox="0 0 15 12"><path d="M1.500 11.500V7q0-2.500 2.500-2.500h7" fill="none" stroke="#eef2fa" strokeWidth="1.800" /><path d="M10 0l5 4.500-5 4.500z" fill="#eef2fa" /></svg>
          </FootButton>
          <FootButton $width="49px" $fill="#69b65b" aria-label="WhatsApp"><FaWhatsapp size={17} /></FootButton>
          <FootButton $width="51px" $fill="#b1934e" aria-label="Configuración"><MdSettings size={18} /></FootButton>
          <Clock>04:46 p. m.</Clock>
        </Footer>
      </Main>
    </Shell>
  </>
);

export default App;
